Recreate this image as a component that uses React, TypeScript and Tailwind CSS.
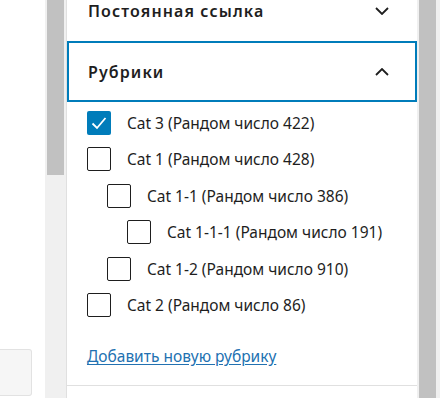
import React from 'react';

interface Cat {
    label: string;
    level: number;
    checked?: boolean;
}

const CATS: Cat[] = [
    { label: 'Cat 3 (Рандом число 422)', level: 0, checked: true },
    { label: 'Cat 1 (Рандом число 428)', level: 0 },
    { label: 'Cat 1-1 (Рандом число 386)', level: 1 },
    { label: 'Cat 1-1-1 (Рандом число 191)', level: 2 },
    { label: 'Cat 1-2 (Рандом число 910)', level: 1 },
    { label: 'Cat 2 (Рандом число 86)', level: 0 },
];

const indentClass = ['pl-0', 'pl-[20px]', 'pl-[40px]'];

const ChevronDown = () => (
    <svg width="14" height="8" viewBox="0 0 14 8" fill="none">
        <path d="M1 1l6 6 6-6" stroke="#1e1e1e" strokeWidth="1.8" />
    </svg>
);

const ChevronUp = () => (
    <svg width="14" height="8" viewBox="0 0 14 8" fill="none">
        <path d="M1 7l6-6 6 6" stroke="#1e1e1e" strokeWidth="1.8" />
    </svg>
);

const Checkbox: React.FC<{ checked?: boolean }> = ({ checked }) =>
    checked ? (
        <span className="flex h-[24px] w-[24px] shrink-0 items-center justify-center rounded-[2px] bg-[#007cba]">
            <svg width="20" height="20" viewBox="0 0 20 20" fill="none">
                <path d="M3.5 10.5l4.5 4.5 8.5-10" stroke="#fff" strokeWidth="1.8" />
            </svg>
        </span>
    ) : (
        <span className="h-[24px] w-[24px] shrink-0 rounded-[2px] border border-[#1e1e1e] bg-white" />
    );

export default function App() {
    return (
        <div
            className="flex h-[398px] w-[440px] overflow-hidden bg-white text-[#1e1e1e]"
            style={{ fontFamily: '"Noto Sans", "Open Sans", sans-serif' }}
        >
            {/* left pane edge */}
            <div className="flex w-[45px] shrink-0 flex-col justify-end pb-[2px]">
                <div className="h-[47px] w-[32px] rounded-r-[3px] border border-l-0 border-[#e2e2e2] bg-[#f6f6f6]" />
            </div>
            <div className="w-[21px] shrink-0 bg-[#f0f0f0] px-[2px]">
                <div className="h-[175px] bg-[#c1c1c1]" />
            </div>

            {/* sidebar panel */}
            <div className="flex w-[351px] shrink-0 flex-col border-l border-[#e0e0e0]">
                <div className="flex h-[41px] items-start justify-between pl-[21px] pr-[28px] pt-[1px]">
                    <span className="text-[16px] font-semibold leading-[20px] tracking-[1.1px]">Постоянная ссылка</span>
                    <span className="pt-[6px]"><ChevronDown /></span>
                </div>
                <div className="flex h-[61px] items-center justify-between border-2 border-[#007cba] pl-[19px] pr-[26px]">
                    <span className="text-[16px] font-semibold leading-[20px] tracking-[1.1px]">Рубрики</span>
                    <ChevronUp />
                </div>
                <div className="flex flex-col gap-[12.4px] pl-[20px] pt-[9px]">
                    {CATS.map((c) => (
                        <div key={c.label} className={`flex h-[24px] items-center gap-[16px] ${indentClass[c.level]}`}>
                            <Checkbox checked={c.checked} />
                            <span className="text-[15.5px] leading-[20px]">{c.label}</span>
                        </div>
                    ))}
                </div>
                <div className="pl-[20px] pt-[27px]">
                    <a href="#" className="text-[15.5px] leading-[20px] text-[#2271b1] underline underline-offset-2">
                        Добавить новую рубрику
                    </a>
                </div>
                <div className="mt-auto mb-[12px] border-b border-[#e0e0e0]" />
            </div>

            {/* page scrollbar */}
            <div className="flex-1 bg-[#f0f0f0] pl-[2px] pr-[4px]">
                <div className="h-full bg-[#c1c1c1]" />
            </div>
        </div>
    );
}
